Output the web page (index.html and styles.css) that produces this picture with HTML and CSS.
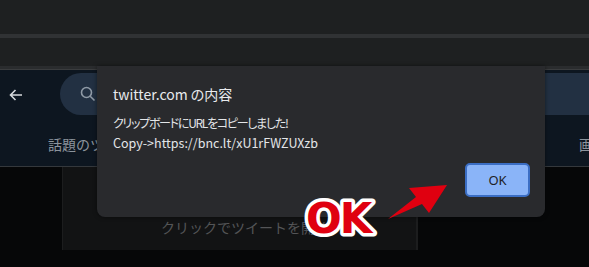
FILE: index.html
```html
<!DOCTYPE html>
<html lang="ja">
<head>
<meta charset="utf-8">
<link rel="stylesheet" href="styles.css">
</head>
<body>
<div class="browser">
  <div class="toolbar"></div>
  <div class="sep"></div>
  <div class="bar2"></div>
  <div class="page">
    <div class="edge"></div>
    <div class="tw-header">
      <div class="top-row">
        <svg class="back" width="14" height="12" viewBox="0 0 14 12"><path d="M13 6H1.5M6.5 1L1.5 6l5 5" fill="none" stroke="#d6d9dc" stroke-width="1.6"/></svg>
        <div class="search">
          <svg width="16" height="16" viewBox="0 0 16 16"><circle cx="6.5" cy="6.5" r="5" fill="none" stroke="#8f9aa6" stroke-width="1.6"/><path d="M10.2 10.2l4.3 4.3" stroke="#8f9aa6" stroke-width="1.6"/></svg>
        </div>
      </div>
      <div class="tabs-row">
        <span class="tab">話題のツイート</span>
        <span class="tab tab-right">画像</span>
      </div>
    </div>
    <div class="content">
      <div class="media"><span class="media-text">クリックでツイートを開く</span></div>
    </div>

    <div class="dialog">
      <div class="dlg-title">twitter.com の内容</div>
      <div class="dlg-msg dlg-jp">クリップボードにURLをコピーしました!</div>
      <div class="dlg-msg">Copy-&gt;https://bnc.lt/xU1rFWZUXzb</div>
      <div class="dlg-actions"><button class="ok">OK</button></div>
    </div>

    <svg class="annot" width="160" height="75" viewBox="0 0 160 75">
      <text x="4" y="66" class="annot-text">OK</text>
      <polygon points="86,52 114,30 107,21 145,18 127,46 120,37" fill="#e00010"/>
    </svg>
  </div>
</div>
</body>
</html>
```
FILE: styles.css
```css
html, body {
  margin: 0;
  padding: 0;
  background: #1e2021;
  overflow: hidden;
}
.browser {
  width: 589px;
  height: 267px;
  display: flex;
  flex-direction: column;
}
.toolbar {
  height: 34px;
  background: #1e2021;
}
.sep {
  height: 4px;
  background: #303234;
}
.bar2 {
  height: 28px;
  background: #1e2021;
}
.page {
  position: relative;
  flex: 1;
  background: #060708;
  display: flex;
  flex-direction: column;
}
.edge {
  height: 3px;
  background: #2a2c2e;
  border-bottom: 1px solid #3a3c3e;
}
.tw-header {
  background: #0d1620;
  border-bottom: 1px solid #34383c;
}
.top-row {
  height: 45px;
  display: flex;
  align-items: flex-start;
}
.back {
  margin: 19px 0 0 9px;
}
.search {
  margin: 3px 0 0 37px;
  flex: 1;
  height: 42px;
  border-radius: 21px 0 0 21px;
  background: #223042;
  display: flex;
  align-items: center;
  padding-left: 20px;
}
.tabs-row {
  height: 51px;
  display: flex;
  align-items: center;
  justify-content: space-between;
  font-family: "Noto Sans CJK JP", sans-serif;
  font-size: 14px;
  color: #8c949d;
}
.tab {
  margin-left: 48px;
  margin-top: 6px;
  white-space: nowrap;
}
.tab-right {
  margin-left: 0;
  margin-right: -18px;
}
.content {
  flex: 1;
  padding-left: 62px;
}
.media {
  width: 356px;
  height: 83px;
  background: #121314;
  border-left: 1px solid #1c1d1e;
  border-right: 2px solid #1c1d1e;
  display: flex;
  align-items: flex-end;
  box-sizing: border-box;
}
.media-text {
  margin: 0 0 13px 98px;
  font-family: "Noto Sans CJK JP", sans-serif;
  font-size: 14px;
  color: #545557;
  white-space: nowrap;
}
.dialog {
  position: absolute;
  left: 97px;
  top: 0;
  width: 448px;
  height: 151px;
  box-sizing: border-box;
  background: #292a2d;
  border-radius: 0 0 8px 8px;
  box-shadow: 0 0 4px rgba(0,0,0,0.5);
  padding: 18px 16px 0 16px;
  font-family: "Noto Sans CJK JP", sans-serif;
  color: #e8eaed;
  font-feature-settings: "palt";
}
.dlg-title {
  font-size: 14px;
  line-height: 20px;
  margin-bottom: 9px;
}
.dlg-msg {
  font-size: 12.5px;
  line-height: 20px;
  color: #e3e5e8;
}
.dlg-jp {
  font-size: 12px;
  letter-spacing: -1.3px;
}
.dlg-actions {
  display: flex;
  justify-content: flex-end;
  margin-top: 10px;
  margin-right: -1px;
}
.ok {
  width: 65px;
  height: 34px;
  box-sizing: border-box;
  background: #8ab4f8;
  border: 2px solid #3b6ec4;
  border-radius: 5px;
  font-family: "Noto Sans", sans-serif;
  font-size: 13px;
  color: #202124;
  padding: 0;
}
.annot {
  position: absolute;
  left: 302px;
  top: 101px;
}
.annot-text {
  font-family: "DejaVu Sans", sans-serif;
  font-weight: bold;
  font-size: 42px;
  fill: #e00010;
  stroke: #ffffff;
  stroke-width: 7px;
  stroke-linejoin: round;
  paint-order: stroke fill;
  letter-spacing: -2px;
}
```
